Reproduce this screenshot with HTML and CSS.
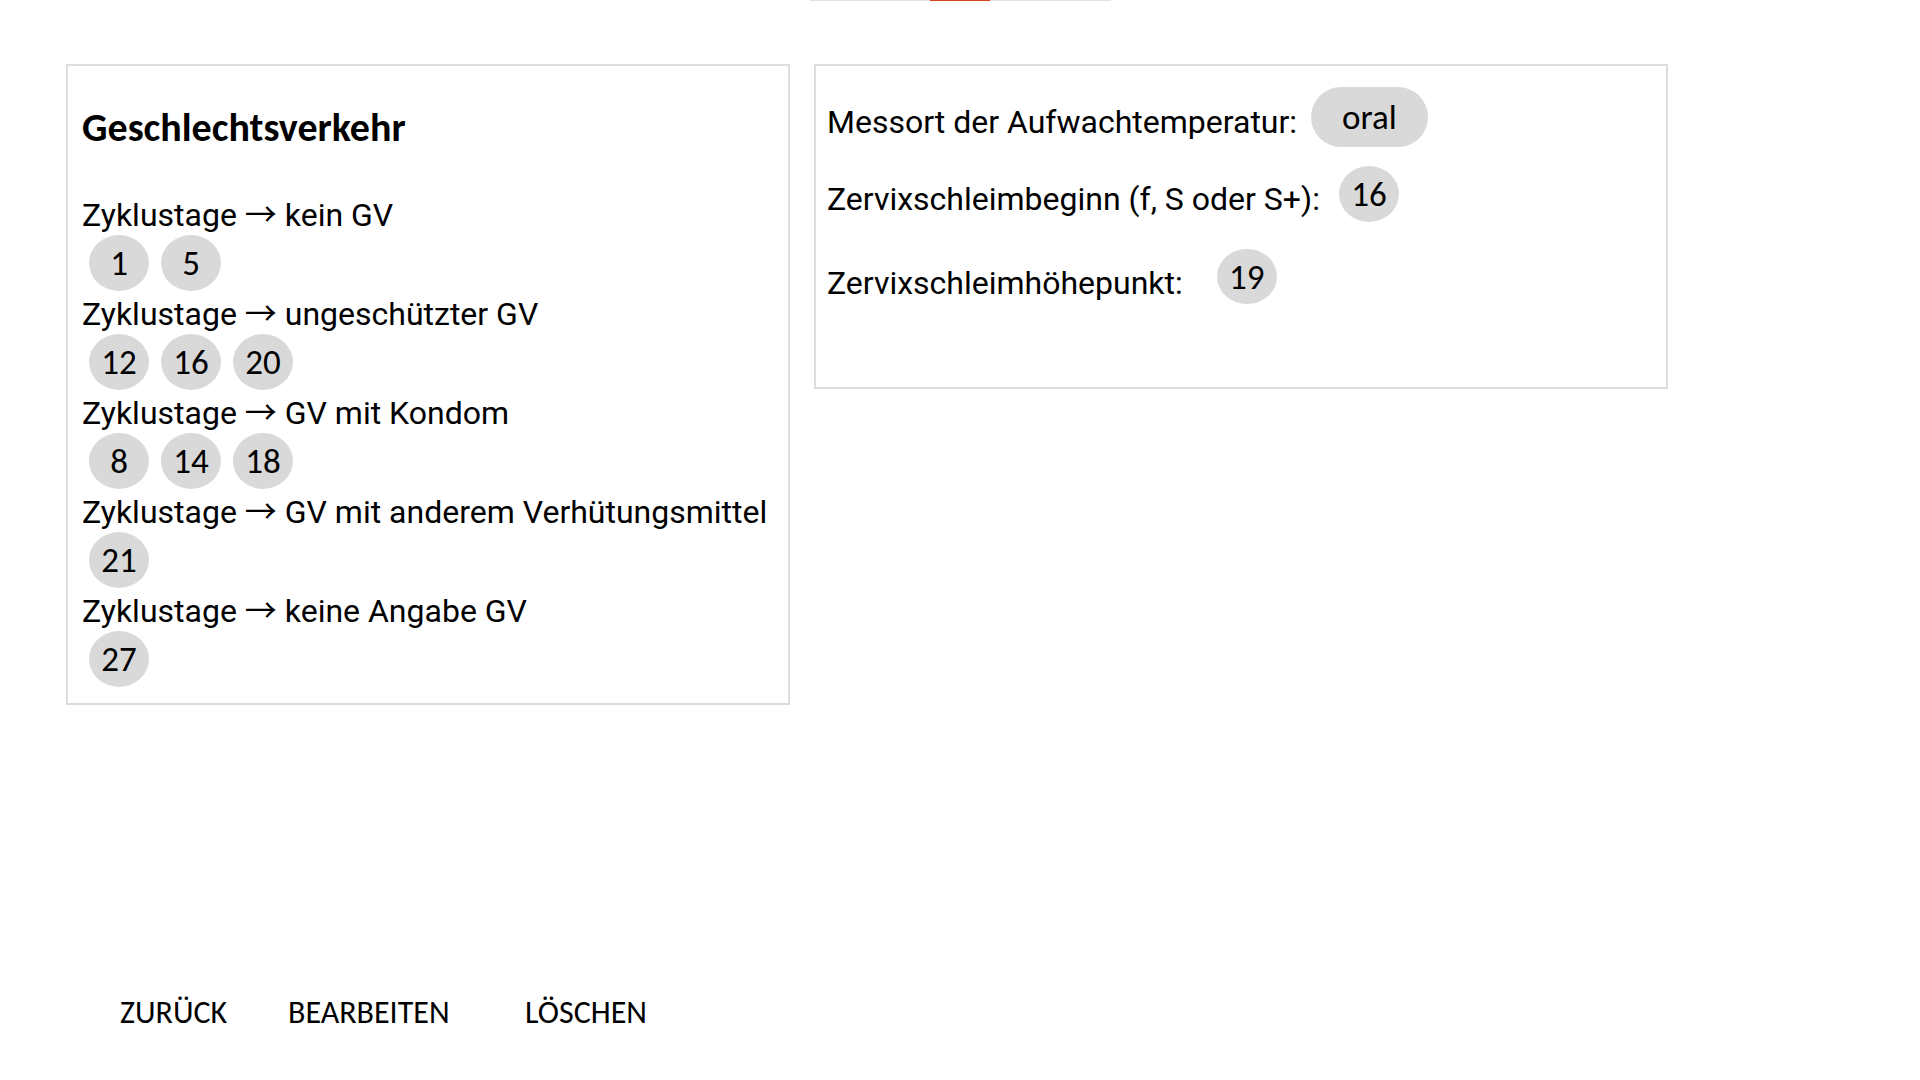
FILE: index.html
```html
<!DOCTYPE html>
<html lang="de">
<head>
<meta charset="utf-8">
<title>Zyklus</title>
<link rel="stylesheet" href="styles.css">
</head>
<body>
<div class="topbar"><div class="topbar-active"></div></div>
<main class="cards">
  <section class="card card-left">
    <h2 class="card-title">Geschlechtsverkehr</h2>
    <div class="group">
      <div class="label">Zyklustage <span class="arrow">→</span> kein GV</div>
      <div class="chips"><span class="chip">1</span><span class="chip">5</span></div>
    </div>
    <div class="group">
      <div class="label">Zyklustage <span class="arrow">→</span> ungeschützter GV</div>
      <div class="chips"><span class="chip">12</span><span class="chip">16</span><span class="chip">20</span></div>
    </div>
    <div class="group">
      <div class="label">Zyklustage <span class="arrow">→</span> GV mit Kondom</div>
      <div class="chips"><span class="chip">8</span><span class="chip">14</span><span class="chip">18</span></div>
    </div>
    <div class="group">
      <div class="label">Zyklustage <span class="arrow">→</span> GV mit anderem Verhütungsmittel</div>
      <div class="chips"><span class="chip">21</span></div>
    </div>
    <div class="group">
      <div class="label">Zyklustage <span class="arrow">→</span> keine Angabe GV</div>
      <div class="chips"><span class="chip">27</span></div>
    </div>
  </section>
  <section class="card card-right">
    <div class="field field-1">
      <span class="label">Messort der Aufwachtemperatur:</span>
      <span class="chip chip-pill">oral</span>
    </div>
    <div class="field field-2">
      <span class="label">Zervixschleimbeginn (f, S oder S+):</span>
      <span class="chip">16</span>
    </div>
    <div class="field field-3">
      <span class="label">Zervixschleimhöhepunkt:</span>
      <span class="chip">19</span>
    </div>
  </section>
</main>
<nav class="actions">
  <button class="action">ZURÜCK</button>
  <button class="action">BEARBEITEN</button>
  <button class="action">LÖSCHEN</button>
</nav>
</body>
</html>
```
FILE: styles.css
```css
html, body {
  margin: 0;
  padding: 0;
  background: #ffffff;
}

body {
  font-family: Roboto, "Liberation Sans", sans-serif;
  color: #000000;
}

.topbar {
  width: 301px;
  height: 1px;
  margin: 0 auto;
  background: #e2e2e2;
  display: flex;
  justify-content: center;
}

.topbar-active {
  width: 60px;
  height: 1px;
  background: #d9411e;
}

.cards {
  display: flex;
  align-items: flex-start;
  gap: 24px;
  margin-top: 63px;
  padding-left: 66px;
}

.card {
  box-sizing: border-box;
  border: 2px solid #dcdcdc;
}

.card-left {
  width: 724px;
  padding: 0 14px 16px 14px;
}

.card-right {
  width: 854px;
  padding: 21px 11px 83px 11px;
}

.card-title {
  font-family: Carlito, Calibri, "Open Sans", sans-serif;
  font-weight: 700;
  font-size: 40px;
  line-height: 44px;
  margin: 40px 0 47px 0;
}

.label {
  font-family: Roboto, "Liberation Sans", sans-serif;
  font-size: 32px;
  line-height: 36px;
  white-space: nowrap;
}

.arrow {
  font-family: "Noto Sans CJK SC", sans-serif;
  font-size: 32px;
  line-height: 0;
}

.group + .group {
  margin-top: 5px;
}

.chips {
  display: flex;
  gap: 12px;
  margin: 2px 0 0 7px;
}

.chip {
  box-sizing: border-box;
  display: flex;
  align-items: center;
  justify-content: center;
  flex: none;
  width: 60px;
  height: 56px;
  border-radius: 50%;
  background: #d9d9d9;
  font-family: Carlito, Calibri, "Open Sans", sans-serif;
  font-size: 35px;
  color: #000000;
}

.chip-pill {
  width: auto;
  height: 60px;
  padding: 0 31px;
  border-radius: 30px;
}

.field {
  display: flex;
  align-items: flex-start;
}

.field-1 .label { margin-top: 17px; }
.field-2 .label { margin-top: 15px; }
.field-3 .label { margin-top: 16px; }

.field-1 .chip { margin-left: 14px; }
.field-2 .chip { margin-left: 19px; }
.field-3 .chip { margin-left: 34px; height: 55px; }

.field-2 { margin-top: 19px; }
.field-3 { margin-top: 27px; }

.actions {
  display: grid;
  grid-template-columns: 168px 237px auto;
  justify-content: start;
  margin-top: 291px;
  padding-left: 120px;
}

.action {
  background: none;
  border: none;
  padding: 0;
  text-align: left;
  font-family: Carlito, Calibri, "Open Sans", sans-serif;
  font-size: 32px;
  line-height: 34px;
  color: #000000;
  cursor: pointer;
}
```
